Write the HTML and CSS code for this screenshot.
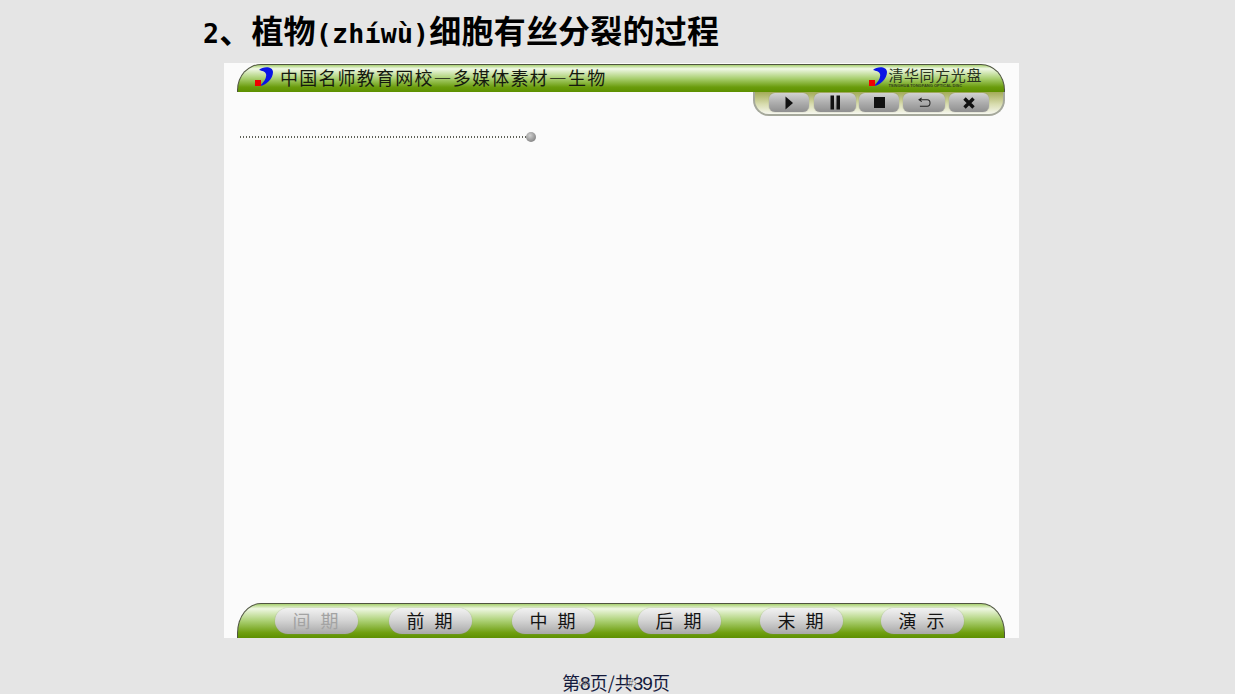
FILE: index.html
```html
<!DOCTYPE html>
<html lang="zh-CN">
<head>
    <meta charset="UTF-8">
    <title>植物细胞有丝分裂的过程</title>
    <link rel="stylesheet" href="styles.css">
</head>
<body>

<h1 class="title"><span class="latin">2</span>、植物<span class="latin">(zhíwù)</span>细胞有丝分裂的过程</h1>

<div class="slide">
    <div class="top-bar">
        <div class="brand">
            <svg class="logo" viewBox="0 0 20 20" width="20" height="20">
                <path d="M5 3 C9 -1 19 -1 19 5 C19 12 12 18 6 19 C10 15 13 11 12 7 C11 4 8 4 5 3 Z" fill="#0a14e6"/>
                <rect x="1" y="13" width="6" height="6" fill="#f00000"/>
            </svg>
            <span class="brand-name">中国名师教育网校—多媒体素材—生物</span>
        </div>
        <div class="brand brand-right">
            <svg class="logo" viewBox="0 0 20 20" width="20" height="20">
                <path d="M5 3 C9 -1 19 -1 19 5 C19 12 12 18 6 19 C10 15 13 11 12 7 C11 4 8 4 5 3 Z" fill="#0a14e6"/>
                <rect x="1" y="13" width="6" height="6" fill="#f00000"/>
            </svg>
            <div class="disc">
                <span class="disc-name">清华同方光盘</span>
                <span class="disc-sub">TSINGHUA TONGFANG OPTICAL DISC</span>
            </div>
        </div>
    </div>

    <div class="controls">
        <button class="ctl">
            <svg viewBox="0 0 12 14" width="12" height="14"><path d="M2.5 0.5 L10 7 L2.5 13.5 Z" fill="#111"/></svg>
        </button>
        <button class="ctl ctl-wide">
            <svg viewBox="0 0 12 14" width="12" height="15"><path d="M1.5 0 H5 V14 H1.5 Z M7.5 0 H11 V14 H7.5 Z" fill="#111"/></svg>
        </button>
        <button class="ctl">
            <svg viewBox="0 0 12 12" width="11" height="11"><rect width="12" height="12" fill="#111"/></svg>
        </button>
        <button class="ctl ctl-wide">
            <svg viewBox="0 0 16 12" width="15" height="11"><path d="M5 1 L2 3 L5 5 M2 3 H11 C15 3 15 10 11 10 H3" fill="none" stroke="#222" stroke-width="1.1"/></svg>
        </button>
        <button class="ctl">
            <svg viewBox="0 0 12 12" width="12" height="12"><path d="M1.5 1.5 L10.5 10.5 M10.5 1.5 L1.5 10.5" fill="none" stroke="#111" stroke-width="3.4"/></svg>
        </button>
    </div>

    <div class="progress">
        <div class="dots"></div>
        <div class="ball"></div>
    </div>

    <div class="bottom-bar">
        <button class="phase phase-off">间期</button>
        <button class="phase">前期</button>
        <button class="phase">中期</button>
        <button class="phase">后期</button>
        <button class="phase">末期</button>
        <button class="phase">演示</button>
    </div>
</div>

<p class="pager">第<span class="num">8<i class="smudge">‹#›</i></span>页/共<span class="num">39<i class="smudge smudge-long">‹#›</i></span>页</p>

</body>
</html>
```

FILE: styles.css
```css
html, body {
    height: 100%;
}
body {
    margin: 0;
    overflow: hidden;
    background-color: #e5e5e5;
    font-family: "Noto Sans CJK SC", "Liberation Sans", sans-serif;
}
button {
    font-family: inherit;
    border: none;
    padding: 0;
}

/* heading */
.title {
    margin: 0;
    padding-left: 203px;
    height: 63px;
    line-height: 58px;
    font-size: 32px;
    font-weight: bold;
    letter-spacing: 0.2px;
    color: #000;
    white-space: nowrap;
}
.latin {
    font-family: "DejaVu Sans Mono", "Noto Sans CJK SC", monospace;
    font-size: 26.6px;
}

/* white flash area */
.slide {
    margin-left: 224px;
    width: 795px;
    height: 575px;
    box-sizing: border-box;
    padding: 1px 14px 0 13px;
    background-color: #fbfbfb;
    display: flex;
    flex-direction: column;
}
.top-bar {
    height: 28px;
    box-sizing: border-box;
    border: 1px solid #4f5440;
    border-bottom: none;
    border-radius: 24px 24px 0 0 / 26px 26px 0 0;
    background: linear-gradient(#a8d070 0%, #f0f8e6 14%, #a9cf70 50%, #6a9c0c 82%, #5d9000 100%);
    display: flex;
    justify-content: space-between;
    align-items: center;
    padding: 0 22px 4px 16px;
}
.brand {
    display: flex;
    align-items: center;
    gap: 6px;
}
.brand-name {
    font-size: 18px;
    letter-spacing: 1.2px;
    line-height: 24px;
    color: #15190f;
    white-space: nowrap;
}
.brand-right {
    gap: 0;
}
.disc {
    display: flex;
    flex-direction: column;
}
.disc-name {
    font-size: 15px;
    line-height: 17px;
    letter-spacing: 0.6px;
    color: #2a3320;
    white-space: nowrap;
}
.disc-sub {
    font-family: "Liberation Sans", sans-serif;
    font-size: 4px;
    line-height: 5px;
    font-weight: bold;
    color: #33401f;
    white-space: nowrap;
}

/* player buttons */
.controls {
    align-self: flex-end;
    width: 252px;
    height: 24px;
    box-sizing: border-box;
    padding: 1px 0 0 14px;
    border: 2px solid #a5a89b;
    border-top: none;
    border-radius: 0 0 16px 16px;
    background: linear-gradient(#a3ab58 0%, #d8dcae 55%, #f6f7ee 100%);
    display: grid;
    grid-template-columns: 45px 45px 44px 46px 40px;
}
.ctl {
    width: 40px;
    height: 19px;
    border-radius: 6px;
    background: linear-gradient(#d2d2d2 0%, #aeaeae 50%, #8f8f8f 100%);
    box-shadow: 0 0 1px #777;
    display: flex;
    align-items: center;
    justify-content: center;
}
.ctl-wide {
    width: 42px;
}

/* timeline */
.progress {
    display: flex;
    align-items: center;
    height: 10px;
    margin: 16px 0 0 3px;
}
.dots {
    width: 286px;
    height: 2px;
    background: repeating-linear-gradient(90deg, #5f6158 0, #5f6158 1px, transparent 1px, transparent 3px);
}
.ball {
    width: 10px;
    height: 10px;
    border-radius: 50%;
    background: radial-gradient(circle at 40% 35%, #d0d0d0, #8b8b8b 70%, #6f6f6f);
}

/* phase buttons */
.bottom-bar {
    margin-top: auto;
    height: 35px;
    box-sizing: border-box;
    padding: 4px 0 0 37px;
    border: 1px solid #4f5440;
    border-bottom: none;
    border-radius: 24px 24px 0 0 / 30px 30px 0 0;
    background: linear-gradient(#a8d070 0%, #eef7e2 14%, #aed278 48%, #6f9f10 84%, #5d9000 100%);
    display: grid;
    grid-template-columns: 114px 123px 126px 122px 121px 83px;
}
.phase {
    width: 83px;
    height: 26px;
    box-sizing: border-box;
    padding-bottom: 2px;
    border-radius: 13px;
    background: linear-gradient(#f2f2f2 0%, #d6d6d6 45%, #a8a8a8 100%);
    box-shadow: 0 0 1px #888;
    font-size: 18px;
    line-height: 24px;
    letter-spacing: 10px;
    text-indent: 8px;
    color: #141414;
    text-align: center;
}
.phase-off {
    color: #a3a3a3;
}

/* footer */
.pager {
    margin: 0;
    padding: 34px 3px 0 0;
    text-align: center;
    font-size: 18px;
    line-height: 20px;
    color: #141a3c;
    white-space: nowrap;
}
.num {
    position: relative;
    font-family: "Liberation Sans", sans-serif;
    font-size: 19px;
    letter-spacing: -1px;
}
.smudge {
    position: absolute;
    left: -2px;
    top: 1px;
    font-size: 10px;
    font-style: normal;
    letter-spacing: 0;
    color: #6e6e6e;
}
.smudge-long {
    left: -8px;
}
```
